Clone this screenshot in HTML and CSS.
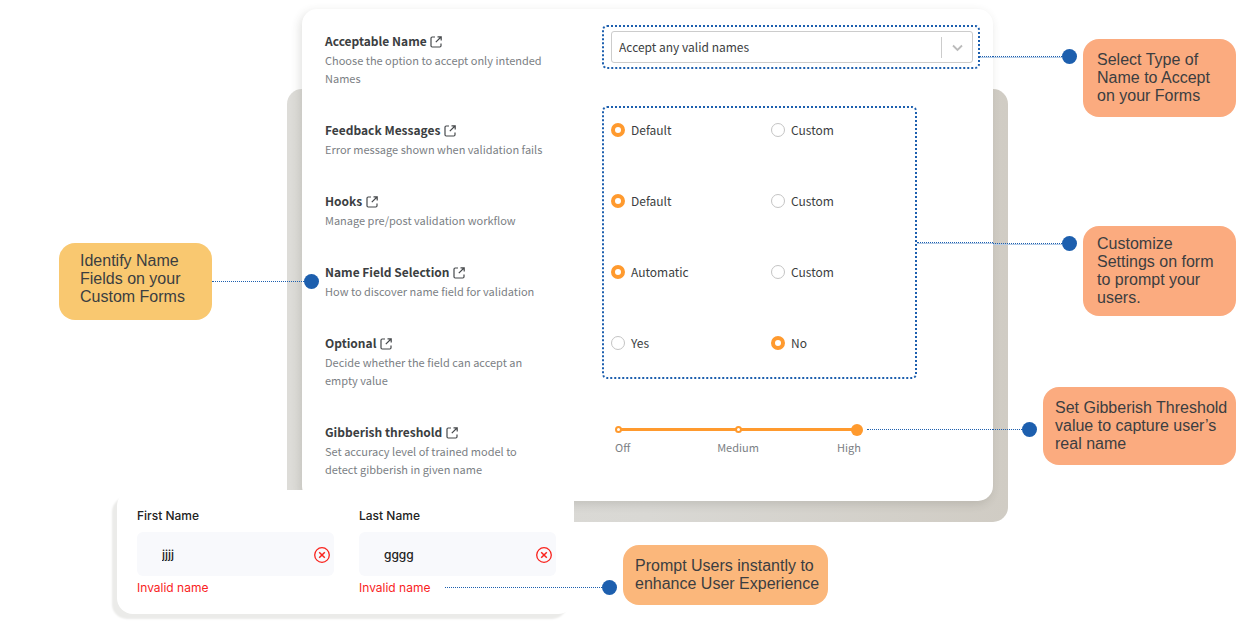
FILE: index.html
```html
<!DOCTYPE html>
<html lang="en">
<head>
  <meta charset="utf-8">
  <title>Name Validation Settings</title>
  <link rel="stylesheet" href="styles.css">
</head>
<body>
  <svg class="symbols" aria-hidden="true">
    <symbol id="external" viewBox="0 0 12 12">
      <path d="M5 1H2.200Q1 1 1 2.200V9.800Q1 11 2.200 11H9.800Q11 11 11 9.800V7.500M7.500 .8H11.200V4.500M11 1L5.800 6.200" fill="none" stroke="currentColor" stroke-width="1.200"/>
    </symbol>
    <symbol id="invalid" viewBox="0 0 16 16">
      <circle cx="8" cy="8" r="7.300" fill="none" stroke="currentColor" stroke-width="1.300"/>
      <path d="M5.200 5.200L10.800 10.800M10.800 5.200L5.200 10.800" stroke="currentColor" stroke-width="1.500"/>
    </symbol>
  </svg>

  <main class="diagram">
    <div class="callouts-left">
      <div class="callout">
        <p class="note note-yellow">Identify Name<br>Fields on your<br>Custom Forms</p>
        <span class="pointer pointer-middle"><span class="line"></span><span class="dot"></span></span>
      </div>
    </div>

    <form class="panel">
      <div class="setting row-1">
        <h2><label for="accept">Acceptable Name</label> <a href="#accept" aria-label="Open"><svg class="icon"><use href="#external"/></svg></a></h2>
        <p>Choose the option to accept only intended Names</p>
      </div>
      <div class="control-line row-1 select-row">
        <div class="outline outline-select">
          <div class="select-box">
            <select id="accept">
              <option>Accept any valid names</option>
            </select>
            <svg class="chevron" viewBox="0 0 32 32"><path d="M.5 6V27" stroke="#ccc"/><path d="M12 14.500L16.500 19L21 14.500" fill="none" stroke="#bbb" stroke-width="1.800"/></svg>
          </div>
        </div>
        <span class="line line-double"></span>
      </div>

      <div class="setting row-2">
        <h2 id="feedback">Feedback Messages <a href="#feedback" aria-label="Open"><svg class="icon"><use href="#external"/></svg></a></h2>
        <p>Error message shown when validation fails</p>
      </div>
      <div class="options row-2" role="radiogroup" aria-labelledby="feedback">
        <label><input type="radio" name="feedback" checked>Default</label>
        <label><input type="radio" name="feedback">Custom</label>
      </div>

      <div class="setting row-3">
        <h2 id="hooks">Hooks <a href="#hooks" aria-label="Open"><svg class="icon"><use href="#external"/></svg></a></h2>
        <p>Manage pre/post validation workflow</p>
      </div>
      <div class="options row-3" role="radiogroup" aria-labelledby="hooks">
        <label><input type="radio" name="hooks" checked>Default</label>
        <label><input type="radio" name="hooks">Custom</label>
      </div>

      <div class="setting row-4">
        <h2 id="selection">Name Field Selection <a href="#selection" aria-label="Open"><svg class="icon"><use href="#external"/></svg></a></h2>
        <p>How to discover name field for validation</p>
      </div>
      <div class="options row-4" role="radiogroup" aria-labelledby="selection">
        <label><input type="radio" name="selection" checked>Automatic</label>
        <label><input type="radio" name="selection">Custom</label>
      </div>

      <div class="setting row-5">
        <h2 id="optional">Optional <a href="#optional" aria-label="Open"><svg class="icon"><use href="#external"/></svg></a></h2>
        <p>Decide whether the field can accept an empty value</p>
      </div>
      <div class="options row-5" role="radiogroup" aria-labelledby="optional">
        <label><input type="radio" name="optional">Yes</label>
        <label><input type="radio" name="optional" checked>No</label>
      </div>

      <div class="control-line group-row">
        <div class="outline outline-group"></div>
        <span class="line line-double"></span>
      </div>

      <div class="setting row-6">
        <h2><label for="threshold">Gibberish threshold</label> <a href="#threshold" aria-label="Open"><svg class="icon"><use href="#external"/></svg></a></h2>
        <p>Set accuracy level of trained model to detect gibberish in given name</p>
      </div>
      <div class="control-line row-6 slider-row">
        <div class="slider">
          <input type="range" id="threshold" min="0" max="2" value="2">
          <span class="mark mark-off"></span>
          <span class="mark mark-medium"></span>
          <div class="ticks"><span>Off</span><span>Medium</span><span>High</span></div>
        </div>
        <span class="line"></span>
      </div>
    </form>

    <div class="callouts-right">
      <div class="callout">
        <span class="pointer"><span class="line line-double"></span><span class="dot"></span></span>
        <p class="note">Select Type of<br>Name to Accept<br>on your Forms</p>
      </div>
      <div class="callout callout-settings">
        <span class="pointer"><span class="line line-double"></span><span class="dot"></span></span>
        <p class="note note-tall">Customize<br>Settings on form<br>to prompt your<br>users.</p>
      </div>
      <div class="callout callout-threshold">
        <span class="pointer pointer-low"><span class="line"></span><span class="dot"></span></span>
        <p class="note note-wide">Set Gibberish Threshold<br>value to capture user’s<br>real name</p>
      </div>
    </div>

    <div class="preview">
      <form class="card">
        <div class="field">
          <label for="first">First Name</label>
          <div class="input-box">
            <input type="text" id="first" value="jjjj">
            <svg class="invalid"><use href="#invalid"/></svg>
          </div>
          <p class="error">Invalid name</p>
        </div>
        <div class="field">
          <label for="last">Last Name</label>
          <div class="input-box">
            <input type="text" id="last" value="gggg">
            <svg class="invalid"><use href="#invalid"/></svg>
          </div>
          <p class="error">Invalid name</p>
        </div>
      </form>
      <div class="callout callout-prompt">
        <span class="pointer pointer-low"><span class="line"></span><span class="dot"></span></span>
        <p class="note note-wide note-amber">Prompt Users instantly to<br>enhance User Experience</p>
      </div>
    </div>
  </main>
</body>
</html>
```

FILE: styles.css
```css
* {
  box-sizing: border-box;
}

body {
  margin: 0;
  background: #fff;
  font-family: "Noto Sans CJK SC", "Noto Sans", sans-serif;
  color: #3b3e41;
}

h2, p {
  margin: 0;
}

.symbols {
  display: none;
}

.diagram {
  display: grid;
  grid-template-columns: 302px minmax(0, 1fr) 262px;
  padding-top: 9px;
  padding-bottom: 12px;
}

/* callouts */
.callouts-left {
  position: relative;
  z-index: 2;
  padding-top: 234px;
  padding-left: 59px;
  margin-right: -17px;
}

.callouts-right {
  position: relative;
  z-index: 2;
  padding-top: 30px;
  padding-right: 19px;
}

.callout {
  display: flex;
  align-items: flex-start;
}

.callout-settings {
  margin-top: 109px;
}

.callout-threshold {
  margin-top: 71px;
}

.callout-prompt {
  position: relative;
  z-index: 2;
  margin-top: 55px;
  margin-left: -129px;
}

.pointer {
  flex: 1;
  display: flex;
  align-items: center;
  margin-top: 10px;
  margin-right: 6px;
}

.callout-prompt .pointer {
  flex: none;
  width: 172px;
}

.pointer-middle {
  align-self: center;
  margin: 0;
}

.pointer-low {
  margin-top: 35px;
}

.line {
  flex: 1;
  height: 1px;
  border-top: 1px dotted #1d5fae;
}

.line-double {
  height: 2px;
  border-bottom: 1px solid #b4cbe6;
}

.dot {
  width: 15px;
  height: 15px;
  border-radius: 50%;
  background: #1d5fae;
}

.note {
  width: 153px;
  padding: 12px 14px;
  border-radius: 16px;
  background: #fbab7f;
  font-family: "Liberation Sans", Arial, sans-serif;
  font-size: 16px;
  line-height: 18px;
  white-space: nowrap;
}

.note-tall {
  padding: 9px 14px;
}

.note-wide {
  width: 193px;
  padding: 12px;
}

.note-amber {
  width: 205px;
  background: #fbb77b;
}

.note-yellow {
  padding: 9px 21px 14px;
  background: #f9c870;
}

/* settings panel */
.panel {
  position: relative;
  z-index: 1;
  display: grid;
  grid-template-columns: 277px minmax(0, 1fr);
  align-self: start;
  padding: 22px 0 23px 23px;
}

.panel::before,
.panel::after {
  content: "";
  position: absolute;
  z-index: -1;
}

.panel::before {
  top: 80px;
  right: -15px;
  bottom: -21px;
  left: -15px;
  border-radius: 15px;
  background: linear-gradient(90deg, #dddcd8, #d9d8d4 50%, #d0ccc4);
}

.panel::after {
  top: 0;
  right: 0;
  bottom: 0;
  left: 0;
  border-radius: 15px;
  background: #fff;
  box-shadow: -2px 3px 10px rgba(60, 60, 50, 0.16);
}

.row-1 { grid-row: 1; }
.row-2 { grid-row: 2; }
.row-3 { grid-row: 3; }
.row-4 { grid-row: 4; }
.row-5 { grid-row: 5; }
.row-6 { grid-row: 6; }

.setting {
  grid-column: 1;
  width: 225px;
  padding-bottom: 33px;
}

.setting.row-6 {
  padding-bottom: 0;
}

.setting h2 {
  font-size: 12px;
  line-height: 20px;
}

.setting p {
  font-size: 11px;
  line-height: 18px;
  color: #7b8084;
}

.setting a {
  margin-left: 1px;
  color: #45484b;
}

.icon {
  width: 12px;
  height: 12px;
  vertical-align: -2px;
}

.control-line {
  grid-column: 2;
  display: flex;
  align-items: center;
}

.outline {
  border: 2px dotted #1d5fae;
  border-radius: 5px;
}

.select-row {
  align-self: start;
  align-items: flex-start;
  margin-top: -6px;
}

.outline-select {
  flex: 1;
  padding: 4px 5px 4px 7px;
}

.select-row .line {
  flex: none;
  width: 13px;
  margin-top: 31px;
}

.select-box {
  position: relative;
}

.select-box select {
  display: block;
  width: 100%;
  height: 32px;
  padding: 0 36px 2px 7px;
  border: 1px solid #ccc;
  border-radius: 3px;
  appearance: none;
  background: #fff;
  font-family: inherit;
  font-size: 12px;
  color: inherit;
}

.chevron {
  position: absolute;
  top: 0;
  right: 0;
  width: 32px;
  height: 32px;
  pointer-events: none;
}

.group-row {
  grid-row: 2 / 6;
  margin-top: -14px;
  margin-bottom: 43px;
  pointer-events: none;
}

.outline-group {
  align-self: stretch;
  width: 315px;
}

.options {
  grid-column: 2;
  display: flex;
  align-self: start;
  padding-left: 9px;
}

.options label {
  display: flex;
  align-items: center;
  gap: 6px;
  width: 160px;
  font-size: 12px;
  line-height: 20px;
}

.options input {
  width: 14px;
  height: 14px;
  margin: 0;
  border: 1px solid #c4c4c4;
  border-radius: 50%;
  appearance: none;
  background: #fff;
}

.options input:checked {
  border: 4px solid #ff9a2e;
}

.slider-row {
  align-items: flex-start;
}

.slider-row .line {
  margin-top: 7px;
}

.slider {
  position: relative;
  width: 251px;
  margin-left: 10px;
  margin-right: 4px;
}

.slider input {
  display: block;
  width: 100%;
  height: 15px;
  margin: 0;
  appearance: none;
  background: linear-gradient(#ff9a2e, #ff9a2e) center / 239px 3px no-repeat;
}

.slider input::-webkit-slider-thumb {
  width: 12px;
  height: 12px;
  border-radius: 50%;
  appearance: none;
  background: #ff9a2e;
}

.mark {
  position: absolute;
  top: 4px;
  width: 7px;
  height: 7px;
  border: 2px solid #ff9a2e;
  border-radius: 50%;
  background: #fff;
}

.mark-off {
  left: 3px;
}

.mark-medium {
  left: calc(50% - 3px);
}

.ticks {
  display: grid;
  grid-template-columns: 1fr 1fr 1fr;
  padding: 1px 2px 0 3px;
  font-size: 11px;
  line-height: 18px;
  text-align: center;
  color: #7b8084;
}

.ticks span:first-child {
  text-align: left;
}

.ticks span:last-child {
  text-align: right;
}

/* form preview */
.preview {
  position: relative;
  z-index: 2;
  grid-column: 1 / 4;
  display: flex;
  align-items: flex-start;
  margin-top: -11px;
  padding-left: 117px;
}

.card {
  display: flex;
  gap: 25px;
  width: 457px;
  padding: 17px 18px 17px 20px;
  border-radius: 16px 0 16px 16px;
  background: #fff;
  box-shadow: -6px 6px 2px -1px #ebebe9;
  font-family: Inter, sans-serif;
}

.field {
  flex: 1;
  font-size: 12px;
  line-height: 18px;
}

.field label {
  display: block;
  font-weight: 500;
  color: #222;
}

.input-box {
  position: relative;
  margin: 7px 0 3px;
}

.input-box input {
  display: block;
  width: 100%;
  height: 44px;
  padding: 0 40px 0 25px;
  border: 0;
  border-radius: 6px;
  background: #f8f9fc;
  font-family: inherit;
  font-size: 12px;
  font-weight: 500;
  color: #222;
}

.invalid {
  position: absolute;
  top: 15px;
  right: 4px;
  width: 16px;
  height: 16px;
  color: #f9231d;
}

.error {
  color: #f9231d;
}
```
